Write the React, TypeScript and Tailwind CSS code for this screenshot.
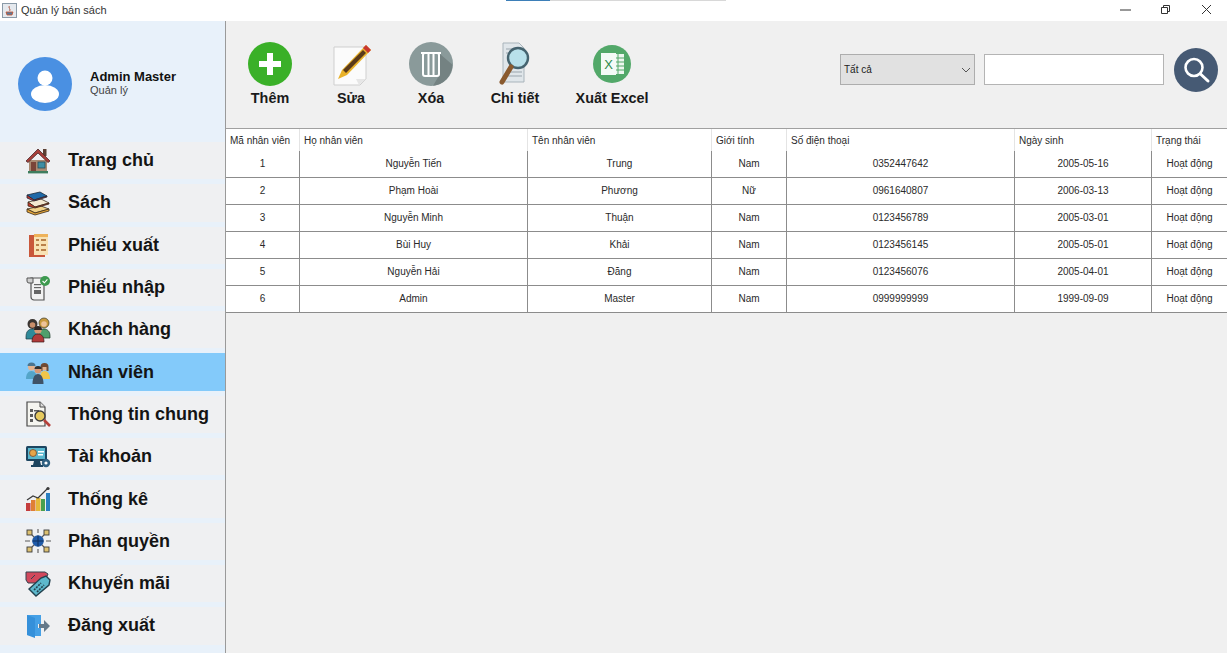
import React from "react";

const NAV: [string, string][] = [
  ["Trang chủ", "home"],
  ["Sách", "books"],
  ["Phiếu xuất", "export"],
  ["Phiếu nhập", "import"],
  ["Khách hàng", "customers"],
  ["Nhân viên", "staff"],
  ["Thông tin chung", "info"],
  ["Tài khoản", "account"],
  ["Thống kê", "stats"],
  ["Phân quyền", "perm"],
  ["Khuyến mãi", "sale"],
  ["Đăng xuất", "logout"],
];

function NavIcon({ name }: { name: string }) {
  const p = { width: 26, height: 26, viewBox: "0 0 26 26" };
  switch (name) {
    case "home":
      return (
        <svg {...p}>
          <rect x="18" y="1" width="3.5" height="7" fill="#5a3f33" />
          <path d="M4 12h18v12H4z" fill="#a98a72" />
          <path d="M1 13L13 1l12 12-2 1.5L13 5 3 14.5z" fill="#a83f3a" stroke="#4a2a2a" strokeWidth="0.8" />
          <rect x="6" y="14" width="5" height="10" fill="#7a4438" />
          <rect x="13" y="14" width="7" height="6" fill="#3f8ea3" stroke="#23505c" strokeWidth="0.8" />
          <rect x="3" y="23" width="20" height="2.4" fill="#3f7d5e" />
        </svg>
      );
    case "books":
      return (
        <svg {...p}>
          <path d="M2 19l14-3 8 3-14 4z" fill="#f0d28a" stroke="#3a2a1a" strokeWidth="0.8" />
          <path d="M2 19v3l8 3 14-4v-2l-14 4z" fill="#e8a93a" stroke="#3a2a1a" strokeWidth="0.8" />
          <path d="M3 12l13-3 8 4-14 4z" fill="#f3e8d0" stroke="#3a2a1a" strokeWidth="0.8" />
          <path d="M3 12v4l7 2 14-4v-1l-14 4z" fill="#c0392b" stroke="#3a2a1a" strokeWidth="0.8" />
          <path d="M2 5l13-3 7 4-13 4z" fill="#1f69a8" stroke="#1a2a3a" strokeWidth="0.8" />
          <path d="M2 5v3l7 3 13-4V6L9 10z" fill="#c9342d" stroke="#1a2a3a" strokeWidth="0.8" />
        </svg>
      );
    case "export":
      return (
        <svg {...p}>
          <rect x="4" y="3" width="16" height="22" fill="#c9573a" />
          <rect x="9" y="2" width="14" height="21" fill="#f8e2b4" />
          <rect x="9" y="2" width="14" height="3" fill="#eeb25a" />
          <g fill="#b9804a">
            <rect x="11" y="7" width="3" height="2" />
            <rect x="16" y="7" width="5" height="2" />
            <rect x="11" y="12" width="3" height="2" />
            <rect x="16" y="12" width="5" height="2" />
            <rect x="11" y="17" width="3" height="2" />
            <rect x="16" y="17" width="5" height="2" />
          </g>
        </svg>
      );
    case "import":
      return (
        <svg {...p}>
          <path d="M6 3h13v22H9a3 3 0 0 1-3-3z" fill="#f2f2f2" stroke="#555" strokeWidth="1.2" />
          <path d="M2 3h6v5H4a2 2 0 0 1-2-2z" fill="#d0d0d0" stroke="#555" strokeWidth="1" />
          <g fill="#666">
            <rect x="9" y="9" width="7" height="1.2" />
            <rect x="9" y="12" width="7" height="1.2" />
            <rect x="9" y="15" width="7" height="4" />
          </g>
          <circle cx="20" cy="6" r="5" fill="#3d9a4f" />
          <path d="M17.6 6l1.8 1.8L22.4 4.4" stroke="#fff" strokeWidth="1.1" fill="none" />
        </svg>
      );
    case "customers":
      return (
        <svg {...p}>
          <circle cx="7.5" cy="7" r="5" fill="#3a3532" />
          <circle cx="7.5" cy="8" r="2.8" fill="#c98f6b" />
          <circle cx="19" cy="6" r="5" fill="#c89a3e" stroke="#3a3a2a" strokeWidth="0.7" />
          <circle cx="19" cy="7" r="2.8" fill="#eec39a" />
          <path d="M1 20c0-5 2-8 6.5-8s6 3 6 8v2H1z" fill="#2f8a9a" stroke="#1d3a42" strokeWidth="0.7" />
          <path d="M14 19c0-5 2-7 5-7s6 2 6 7v2H14z" fill="#4f9f6c" stroke="#1d3a2a" strokeWidth="0.7" />
          <circle cx="13" cy="13" r="3.7" fill="#d99a75" />
          <path d="M9 13a4 4 0 0 1 8 0z" fill="#2f2623" />
          <path d="M7 25c0-5 2-8 6-8s6 3 6 8z" fill="#b23a3a" stroke="#3a1a1a" strokeWidth="0.7" />
        </svg>
      );
    case "staff":
      return (
        <svg {...p}>
          <circle cx="6.5" cy="8" r="3.5" fill="#e3b38f" />
          <path d="M2.5 7a4 3.5 0 0 1 8 0z" fill="#4a7590" />
          <path d="M1 20c0-5 2-8 5.5-8s5.5 3 5.5 8z" fill="#54a5c9" />
          <circle cx="19.5" cy="8" r="3.5" fill="#e3b38f" />
          <path d="M15.5 8a4 4 0 0 1 8 0v4h-2V8h-4v4h-2z" fill="#6f4a34" />
          <path d="M15 20c0-5 1-8 4.5-8s5.5 3 5.5 8z" fill="#f0c64a" />
          <circle cx="13" cy="11" r="3.5" fill="#d99a75" />
          <path d="M9.5 10a3.5 3 0 0 1 7 0z" fill="#33302e" />
          <path d="M7.5 25c0-6 2-10 5.5-10s5.5 4 5.5 10z" fill="#3f5266" />
        </svg>
      );
    case "info":
      return (
        <svg {...p}>
          <path d="M2 1h13l5 5v19H2z" fill="#f5f5f0" stroke="#4a4a4a" strokeWidth="1.2" />
          <path d="M15 1v5h5" fill="#ddd" stroke="#4a4a4a" strokeWidth="1" />
          <g fill="#5a5a5a">
            <rect x="5" y="8" width="3" height="3" />
            <rect x="5" y="13" width="3" height="3" />
            <rect x="5" y="18" width="3" height="3" />
            <rect x="9" y="9" width="5" height="1.5" />
          </g>
          <circle cx="15" cy="15" r="5" fill="#e6c95e" stroke="#3d3d3d" strokeWidth="1.4" />
          <path d="M19 19l6 6" stroke="#b5403a" strokeWidth="2.6" />
        </svg>
      );
    case "account":
      return (
        <svg {...p}>
          <rect x="1" y="2" width="21" height="15" rx="1.5" fill="#1d4560" />
          <rect x="3" y="4" width="17" height="11" fill="#58b7cf" />
          <circle cx="8" cy="9" r="3.5" fill="#e5a54a" stroke="#7a4a2a" strokeWidth="0.8" />
          <rect x="13" y="7" width="6" height="1.5" fill="#fff" />
          <rect x="13" y="10" width="5" height="1.5" fill="#fff" />
          <path d="M9 17h6l1 4H8z" fill="#1d4560" />
          <rect x="6" y="21" width="12" height="2" fill="#1d4560" />
          <circle cx="21" cy="19" r="4.2" fill="#2f5f80" />
          <circle cx="21" cy="19" r="1.6" fill="#fff" />
        </svg>
      );
    case "stats":
      return (
        <svg {...p}>
          <rect x="1" y="17" width="4.5" height="8" fill="#c43c3c" />
          <rect x="6" y="14" width="4.5" height="11" fill="#e07f35" />
          <rect x="11" y="12" width="4.5" height="13" fill="#e5b93a" />
          <rect x="16" y="13" width="4" height="12" fill="#4aa04f" />
          <rect x="21" y="7" width="4" height="18" fill="#2a7fc0" />
          <path d="M2 14l6-4 5 2 5-5 5-5" stroke="#3a3a3a" strokeWidth="1.2" fill="none" />
          <circle cx="23" cy="2.5" r="1.6" fill="#3a3a3a" />
        </svg>
      );
    case "perm":
      return (
        <svg {...p}>
          <g stroke="#5a5a5a" strokeWidth="1.1">
            <path d="M7 7l3 3M19 7l-3 3M7 19l3-3M19 19l-3-3M13 1v4M13 21v4M0 13h5M21 13h5" />
          </g>
          <g fill="#dcc070" stroke="#3a3a3a" strokeWidth="0.9">
            <rect x="2" y="2" width="5" height="5" />
            <rect x="19" y="2" width="5" height="5" />
            <rect x="2" y="19" width="5" height="5" />
            <rect x="19" y="19" width="5" height="5" />
          </g>
          <circle cx="13" cy="13" r="5.8" fill="#1f5aa8" />
          <path d="M7.5 13h11M13 7.5v11" stroke="#10305f" strokeWidth="1" />
        </svg>
      );
    case "sale":
      return (
        <svg {...p}>
          <path d="M1 1h19l3 2-4 9H3L1 9z" fill="#d1485c" stroke="#33424f" strokeWidth="1" />
          <path d="M6 8l4-4" stroke="#33424f" strokeWidth="1" />
          <path d="M21 5l4 4-1 5-13 11-7-7L16 7z" fill="#5db8cc" stroke="#23424f" strokeWidth="1.4" />
          <path d="M9 19l7-7M12 21l7-7" stroke="#23424f" strokeWidth="1.6" strokeDasharray="2 1" />
        </svg>
      );
    default:
      return (
        <svg {...p}>
          <path d="M2 2h14v9h-3v4h3v8H8l-6-1z" fill="#45a0e6" />
          <path d="M2 2l8 3v20l-8-3z" fill="#3590da" />
          <path d="M14 11h5V7l6 6-6 6v-4h-5z" fill="#64798a" />
        </svg>
      );
  }
}

const COLS = "grid grid-cols-[74px_228px_184px_75px_228px_137px_75px]";
const HEAD = ["Mã nhân viên", "Họ nhân viên", "Tên nhân viên", "Giới tính", "Số điện thoại", "Ngày sinh", "Trạng thái"];
const ROWS = [
  ["1", "Nguyễn Tiến", "Trung", "Nam", "0352447642", "2005-05-16", "Hoạt động"],
  ["2", "Phạm Hoài", "Phương", "Nữ", "0961640807", "2006-03-13", "Hoạt động"],
  ["3", "Nguyễn Minh", "Thuận", "Nam", "0123456789", "2005-03-01", "Hoạt động"],
  ["4", "Bùi Huy", "Khải", "Nam", "0123456145", "2005-05-01", "Hoạt động"],
  ["5", "Nguyễn Hải", "Đăng", "Nam", "0123456076", "2005-04-01", "Hoạt động"],
  ["6", "Admin", "Master", "Nam", "0999999999", "1999-09-09", "Hoạt động"],
];

function ToolBtn({ label, width, children }: { label: string; width: string; children: React.ReactNode }) {
  return (
    <div className={`flex flex-col items-center ${width}`}>
      <div className="h-[48px] flex items-center justify-center">{children}</div>
      <div className="mt-[1px] text-[14.4px] leading-[18px] font-bold text-[#1a1a1a] whitespace-nowrap">
        {label}
      </div>
    </div>
  );
}

export default function App() {
  return (
    <div className="w-[1227px] h-[653px] overflow-hidden bg-white flex flex-col font-['Liberation_Sans',sans-serif] text-[#222]">
      <div className="h-[21px] shrink-0 bg-white flex items-center relative">
        <svg width="15" height="15" viewBox="0 0 15 15" className="ml-[2px]">
          <rect x="0.5" y="0.5" width="14" height="14" fill="#e5e9ee" stroke="#8a9aa8" />
          <path d="M7.5 3c-2 2 2 3 0 5M4 9h7l-1 3H5z" stroke="#c8512c" fill="#5a7a9a" strokeWidth="0.8" />
        </svg>
        <span className="ml-[4px] text-[11px] text-[#333]">Quản lý bán sách</span>
        <div className="absolute left-[506px] top-0 h-[1px] w-[220px] bg-[#d8d8d8]">
          <div className="h-[1px] w-[44px] bg-[#3d7fb8]" />
        </div>
        <div className="ml-auto flex items-center h-full -mt-[3px]">
          <svg width="11" height="11" viewBox="0 0 11 11" className="mr-[29px]">
            <path d="M0 6h11" stroke="#333" strokeWidth="1" />
          </svg>
          <svg width="11" height="11" viewBox="0 0 11 11" className="mr-[30px]">
            <path d="M1.5 3.5h6v6h-6zM3.5 3.5v-2h6v6h-2" stroke="#333" fill="none" />
          </svg>
          <svg width="11" height="11" viewBox="0 0 11 11" className="mr-[15px]">
            <path d="M1 1l9 9M10 1l-9 9" stroke="#333" />
          </svg>
        </div>
      </div>

      <div className="flex-1 flex min-h-0">
        <aside className="w-[225px] shrink-0 bg-[#e8f1fa] flex flex-col">
          <div className="h-[121px] shrink-0 flex items-center pl-[18px] pt-[5px]">
            <svg width="54" height="54" viewBox="0 0 54 54">
              <circle cx="27" cy="27" r="27" fill="#4a90e2" />
              <circle cx="27" cy="21" r="7.5" fill="#fff" />
              <ellipse cx="27" cy="37" rx="14" ry="9" fill="#fff" />
            </svg>
            <div className="ml-[18px] -mt-[2px]">
              <div className="text-[13px] leading-[15px] font-bold text-[#111]">Admin Master</div>
              <div className="text-[11px] leading-[13px] text-[#444]">Quản lý</div>
            </div>
          </div>
          <nav className="flex flex-col gap-[5px]">
            {NAV.map(([label, icon]) => {
              const active = label === "Nhân viên";
              return (
                <div
                  key={label}
                  className={`h-[37.3px] flex items-center ${active ? "bg-[#83cafa]" : "bg-[#eff0f2]"}`}
                >
                  <div className="w-[68px] shrink-0 pl-[25px]">
                    <NavIcon name={icon} />
                  </div>
                  <span className="text-[18px] font-bold text-[#141414] whitespace-nowrap">{label}</span>
                </div>
              );
            })}
          </nav>
        </aside>

        <main className="flex-1 min-w-0 bg-[#f0f0f0] border-l border-[#9a9a9a] flex flex-col">
          <div className="h-[107px] shrink-0 flex relative">
            <div className="flex items-start pt-[19px]">
              <ToolBtn label="Thêm" width="w-[44px] ml-[22px]">
                <svg width="44" height="44" viewBox="0 0 44 44">
                  <circle cx="22" cy="22" r="22" fill="#3ab028" />
                  <path d="M22 11v22M11 22h22" stroke="#fff" strokeWidth="6" />
                </svg>
              </ToolBtn>
              <ToolBtn label="Sửa" width="w-[40px] ml-[39px]">
                <svg width="42" height="44" viewBox="0 0 42 44" className="ml-[3px]">
                  <path d="M2 5h32v32l-6 6H2z" fill="#fbfbfb" stroke="#cfcfcf" />
                  <path d="M27 43l-3-6 10 0z" fill="#e6e6e6" />
                  <path d="M34 3l5 5-24 25-9 4 4-9z" fill="#e9b22a" />
                  <path d="M31 8l3 3-20 20-3-3z" fill="#5a3a1a" />
                  <path d="M34 3l5 5-3 3-5-5z" fill="#c8362f" />
                </svg>
              </ToolBtn>
              <ToolBtn label="Xóa" width="w-[44px] ml-[38px]">
                <svg width="44" height="44" viewBox="0 0 44 44">
                  <circle cx="22" cy="22" r="22" fill="#8a9a9a" />
                  <path d="M31 12v20L24 43.8a22 22 0 0 0 19.5-21z" fill="#748282" />
                  <rect x="14" y="11" width="16" height="23" rx="2" fill="none" stroke="#fff" strokeWidth="2" />
                  <path d="M19.5 11v23M24.5 11v23M12 11h20" stroke="#fff" strokeWidth="2" />
                </svg>
              </ToolBtn>
              <ToolBtn label="Chi tiết" width="w-[44px] ml-[40px]">
                <svg width="34" height="44" viewBox="0 0 34 44">
                  <path d="M5 1h16l5 5v34H5z" fill="#e0e6ea" stroke="#a9b4bb" />
                  <g stroke="#9aa5ad"><path d="M8 7h12M8 11h14M8 30h16M8 34h16" /></g>
                  <circle cx="20" cy="16" r="10" fill="#b8e0ea" stroke="#45636f" strokeWidth="2.4" />
                  <path d="M13 25L4 40" stroke="#8a5a2e" strokeWidth="5" strokeLinecap="round" />
                </svg>
              </ToolBtn>
              <ToolBtn label="Xuất Excel" width="w-[72px] ml-[39px]">
                <svg width="38" height="38" viewBox="0 0 38 38">
                  <circle cx="19" cy="19" r="19" fill="#52a869" />
                  <rect x="19" y="9" width="12" height="20" fill="#ecf6ef" />
                  <path d="M19 13h12M19 17h12M19 21h12M19 25h12M25 9v20" stroke="#52a869" />
                  <rect x="8" y="8" width="15" height="22" fill="#f4faf6" />
                  <text x="15.5" y="24" textAnchor="middle" fontSize="13" fill="#2f8a4c" fontFamily="Liberation Sans">X</text>
                </svg>
              </ToolBtn>
            </div>
            <div className="ml-auto flex items-center mr-[9px] mt-[7px] h-[83px] gap-[9px]">
              <div className="w-[135px] h-[31px] bg-[#e1e1e1] border border-[#adadad] flex items-center pl-[3px] text-[10px] text-[#222]">
                <span>Tất cả</span>
                <svg width="10" height="6" viewBox="0 0 10 6" className="ml-auto mr-[3px]">
                  <path d="M1 1l4 4 4-4" stroke="#555" fill="none" />
                </svg>
              </div>
              <div className="w-[180px] h-[31px] bg-white border border-[#b4b4b4]" />
              <svg width="44" height="44" viewBox="0 0 44 44" className="ml-[1px]">
                <circle cx="22" cy="22" r="22" fill="#465a74" />
                <circle cx="20" cy="19.5" r="8.5" fill="none" stroke="#fff" strokeWidth="2.6" />
                <path d="M26.5 26L34 33" stroke="#fff" strokeWidth="3" strokeLinecap="round" />
              </svg>
            </div>
          </div>

          <div className="border-t border-[#a0a0a0] text-[10px] text-[#2a2a2a]">
            <div className={`${COLS} h-[22px] bg-white`}>
              {HEAD.map((h) => (
                <div key={h} className="flex items-center pl-[4px] border-r border-[#e4e4e4] whitespace-nowrap last:border-r-0">
                  {h}
                </div>
              ))}
            </div>
            {ROWS.map((r) => (
              <div key={r[0]} className={`${COLS} h-[27px] bg-white border-b border-[#8c8c8c]`}>
                {r.map((c, i) => (
                  <div key={i} className="flex items-center justify-center pb-[1px] border-r border-[#8c8c8c] last:border-r-0">
                    {c}
                  </div>
                ))}
              </div>
            ))}
          </div>
        </main>
      </div>
    </div>
  );
}
